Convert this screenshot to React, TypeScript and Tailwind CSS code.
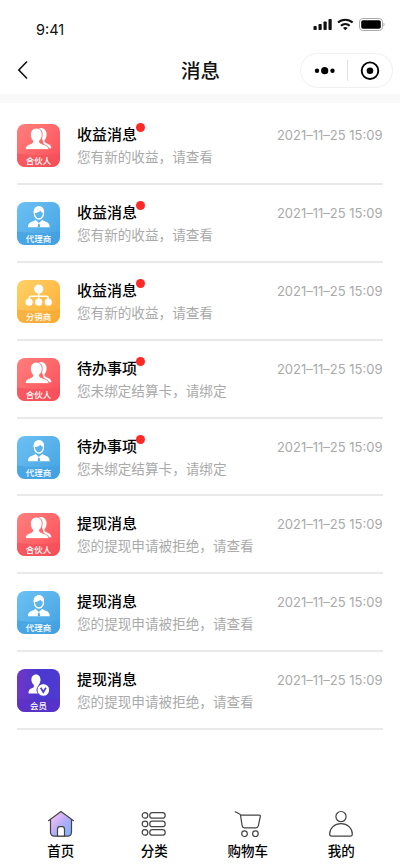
import React from "react";

type Role = "partner" | "agent" | "seller" | "member";

interface Message {
    id: number;
    role: Role;
    title: string;
    content: string;
    time: string;
    unread: boolean;
}

const TIME = "2021–11–25 15:09";

const messages: Message[] = [
    { id: 1, role: "partner", title: "收益消息", content: "您有新的收益，请查看", time: TIME, unread: true },
    { id: 2, role: "agent", title: "收益消息", content: "您有新的收益，请查看", time: TIME, unread: true },
    { id: 3, role: "seller", title: "收益消息", content: "您有新的收益，请查看", time: TIME, unread: true },
    { id: 4, role: "partner", title: "待办事项", content: "您未绑定结算卡，请绑定", time: TIME, unread: true },
    { id: 5, role: "agent", title: "待办事项", content: "您未绑定结算卡，请绑定", time: TIME, unread: true },
    { id: 6, role: "partner", title: "提现消息", content: "您的提现申请被拒绝，请查看", time: TIME, unread: false },
    { id: 7, role: "agent", title: "提现消息", content: "您的提现申请被拒绝，请查看", time: TIME, unread: false },
    { id: 8, role: "member", title: "提现消息", content: "您的提现申请被拒绝，请查看", time: TIME, unread: false },
];

const roles = {
    partner: { label: "合伙人", bg: "bg-linear-to-br from-[#ff7f7c] to-[#fb4a58]", band: "#f5505a" },
    agent: { label: "代理商", bg: "bg-linear-to-br from-[#6cc1f3] to-[#43a2e2]", band: "#429fe0" },
    seller: { label: "分销商", bg: "bg-linear-to-br from-[#ffd166] to-[#fcac2f]", band: "#f5aa36" },
    member: { label: "会员", bg: "bg-linear-to-r from-[#7035c6] via-[#4a38cf] to-[#4d3ad2]", band: "#5a2fc4" },
};

// white glyph in the upper part of the badge
const RoleGlyph = ({ role }: { role: Role }) => {
    if (role === "partner") {
        return (
            <g fill="#fff">
                <path d="M22 4.300c4-1.300 7.600 1.600 7.600 5.900 0 2.500-.8 4.500-2 5.800-.5 1.700 0 2.400 1.800 3.200 3.200 1.300 4.900 2 5 5H28z" />
                <path
                    d="M19.300 4.100c3.700 0 5.900 2.800 5.900 6.600 0 2.500-1 4.800-2.600 6.100-.4 1.700.2 2.200 2.200 3 3 1.200 7 1.700 7 5.800H8.200c0-3.800 2.400-4.700 5.300-5.800 1.900-.7 2.500-1.300 2.200-3-1.400-1.300-2.300-3.600-2.300-6.100 0-3.800 2.300-6.600 5.900-6.600z"
                    stroke="#fd6a6c"
                    strokeWidth="0.900"
                />
            </g>
        );
    }
    if (role === "agent") {
        return (
            <g>
                <ellipse cx="21.900" cy="11" rx="4.600" ry="6" fill="none" stroke="#fff" strokeWidth="1.300" />
                <path d="M16.700 11c-.6-4.200 1.800-6.800 5.200-6.800s5.700 2.600 5.100 6.800c-1.800-.1-2.800-1-3.600-2.300-1.600 1.500-4.200 2.400-6.700 2.300z" fill="#fff" />
                <path d="M18.400 17.700l3.500 3.200 3.500-3.200c.8 1 2 1.500 3.300 2 2.900 1.100 4 2.300 4 5.600H10.900c0-3.300 1.200-4.500 4.200-5.600 1.300-.5 2.500-1 3.300-2z" fill="#fff" />
                <path d="M21.200 21.800h1.400l.6 3.500h-2.600z" fill="#55aee8" />
            </g>
        );
    }
    if (role === "seller") {
        return (
            <g fill="#fff">
                <circle cx="21.700" cy="9" r="4.600" />
                <path d="M21.700 12v8M12.100 20v-1.500c0-1.500.8-2.300 2.300-2.300H29c1.500 0 2.300.8 2.300 2.300V20" fill="none" stroke="#fff" strokeWidth="1.400" />
                <circle cx="12.100" cy="22.200" r="3.600" />
                <circle cx="21.700" cy="22.200" r="3.600" />
                <circle cx="31.300" cy="22.200" r="3.600" />
            </g>
        );
    }
    return (
        <g>
            <path d="M19 5.500c2.900 0 4.500 2.300 4.500 5.200 0 2.100-.7 3.800-1.800 5-.5 1.700.2 2.300 2.100 3.100l1 5.800H11.600c-.1-3.500 1-4.500 3.600-5.500 1.600-.6 2-1.500 1.500-3.400-1.400-1.200-2.300-2.900-2.300-5 0-2.900 1.700-5.200 4.600-5.200z" fill="#fff" />
            <circle cx="26.300" cy="21" r="6.300" fill="#fff" stroke="#4b39cf" strokeWidth="1" />
            <path d="M23.700 18.800l2.600 4.400 2.600-4.400" fill="none" stroke="#4a38cf" strokeWidth="1.700" />
        </g>
    );
};

const RoleBadge = ({ role }: { role: Role }) => {
    const item = roles[role];
    return (
        <div className={`grid size-[43px] shrink-0 overflow-hidden rounded-[8px] ${item.bg}`}>
            <svg viewBox="0 0 43 43" className="col-start-1 row-start-1 size-[43px]">
                <path d="M0 29.500Q21.500 33 43 29.500V43H0z" fill={item.band} opacity="0.650" />
                <RoleGlyph role={role} />
            </svg>
            <span className="col-start-1 row-start-1 self-end pb-[2px] text-center text-[8.500px] leading-[10px] font-medium text-white">
                {item.label}
            </span>
        </div>
    );
};

const StatusBar = () => (
    <div className="flex h-[48px] items-start justify-between pr-[15px] pl-9">
        <span className="pt-[21px] font-['Inter'] text-[14.500px] leading-[18px]">9:41</span>
        <svg width="72" height="14" viewBox="0 0 72 14" className="mt-[18px]">
            <g fill="#111">
                <rect x="0.500" y="8" width="3.200" height="4" rx="0.800" />
                <rect x="5.500" y="6" width="3.200" height="6" rx="0.800" />
                <rect x="10.500" y="3.500" width="3.200" height="8.500" rx="0.800" />
                <rect x="15.500" y="1" width="3.200" height="11" rx="0.800" />
            </g>
            <g fill="none" stroke="#111" strokeWidth="2.100">
                <path d="M25 4.600c4-3.900 10.600-3.900 14.600 0" />
                <path d="M27.900 7.800c2.500-2.300 6.300-2.300 8.800 0" />
            </g>
            <path d="M30 9.900c1.300-1.100 3.300-1.100 4.600 0L32.300 12.200z" fill="#111" />
            <rect x="46.500" y="0.500" width="23" height="12" rx="3.300" fill="#fff" stroke="#aaa" />
            <rect x="48.200" y="2.200" width="19.600" height="8.600" rx="1.800" fill="#000" />
            <path d="M70.500 4.500v4c1.400-.6 1.400-3.400 0-4z" fill="#aaa" />
        </svg>
    </div>
);

const NavBar = () => (
    <div className="grid h-[46px] grid-cols-[1fr_auto_1fr] items-center pr-[7px] pb-[2px] pl-[17px]">
        <svg width="12" height="20" viewBox="0 0 12 20" fill="none" stroke="#111" strokeWidth="1.600">
            <path d="M10 1.500L1.800 10l8.200 8.500" />
        </svg>
        <h1 className="mr-[9px] text-[19.500px] leading-7 font-medium">消息</h1>
        <div className="flex h-[35px] w-[93px] items-center justify-self-end rounded-full border border-[#f0f0f0]">
            <svg width="91" height="33" viewBox="0 0 91 33">
                <g fill="#000">
                    <circle cx="16" cy="16.700" r="2.200" />
                    <circle cx="23.700" cy="16.700" r="3.600" />
                    <circle cx="31.500" cy="16.700" r="2.200" />
                    <circle cx="69" cy="16.700" r="3.300" />
                </g>
                <path d="M46.500 6v21" stroke="#dedede" />
                <circle cx="69" cy="16.700" r="8.300" fill="none" stroke="#000" strokeWidth="1.900" />
            </svg>
        </div>
    </div>
);

const MessageRow = ({ message }: { message: Message }) => (
    <li className="flex h-[77.880px] border-b-2 border-[#e9e9e9] pt-[17px]">
        <RoleBadge role={message.role} />
        <div className="-mt-px ml-[17px] flex-1">
            <div className="flex items-start justify-between">
                <div className="flex">
                    <h2 className="text-[15px] leading-[22px] font-medium text-black">{message.title}</h2>
                    {message.unread && <span className="-ml-px size-[9px] rounded-full bg-[#fb2a26]" />}
                </div>
                <span className="pt-[2px] pr-[0.500px] font-['Inter'] text-[13px] leading-[20px] text-[#aaaaaa]">
                    {message.time}
                </span>
            </div>
            <p className="text-[13.600px] leading-[23px] text-[#aaaaaa]">{message.content}</p>
        </div>
    </li>
);

const tabs = [
    {
        label: "首页",
        icon: (
            <>
                <defs>
                    <linearGradient id="home" x1="0" y1="0" x2="1" y2="1">
                        <stop offset="0.150" stopColor="#f0bdf6" />
                        <stop offset="0.550" stopColor="#b0adfa" />
                        <stop offset="1" stopColor="#78b4fa" />
                    </linearGradient>
                </defs>
                <path d="M3.500 9.500V22c0 2.800 1.200 4.200 4 4.200h13c2.800 0 4-1.400 4-4.200V9.500L14 1.700z" fill="url(#home)" stroke="none" />
                <path d="M1.500 10.700L14 1.500l12.500 9.200M3.500 9.500V22c0 2.800 1.200 4.200 4 4.200h13c2.800 0 4-1.400 4-4.200V9.500" />
                <path d="M10.500 26.200v-6.700c0-1.800.8-2.800 2.300-2.800h2.400c1.500 0 2.300 1 2.300 2.800v6.700z" fill="#fff" />
            </>
        ),
    },
    {
        label: "分类",
        icon: (
            <>
                <circle cx="5" cy="5.400" r="2.800" />
                <circle cx="5" cy="13.900" r="2.800" />
                <circle cx="5" cy="22.400" r="2.800" />
                <rect x="9.700" y="2.600" width="15.500" height="5.600" rx="2.800" />
                <rect x="9.700" y="11.100" width="15.500" height="5.600" rx="2.800" />
                <rect x="9.700" y="19.600" width="15.500" height="5.600" rx="2.800" />
            </>
        ),
    },
    {
        label: "购物车",
        icon: (
            <>
                <path d="M1.200 1.800l4 2c.9.400 1.200.8 1.400 1.700M6.500 5.100h18.700c.9 0 1.300.5 1.100 1.400l-1.900 9.200c-.3 1.500-1 2.100-2.500 2.100H10.500c-1.500 0-2.200-.7-2.400-2.100z" />
                <circle cx="10.500" cy="23.700" r="2.800" />
                <circle cx="21.400" cy="23.700" r="2.800" />
            </>
        ),
    },
    {
        label: "我的",
        icon: (
            <>
                <circle cx="14" cy="6.600" r="5.100" />
                <path d="M2.700 24c0-5.800 4.800-10.400 11.300-10.400S25.300 18.200 25.300 24c0 1.600-.5 2.200-2 2.200H4.700c-1.500 0-2-.6-2-2.200z" />
            </>
        ),
    },
];

const TabBar = () => (
    <nav className="mt-auto grid h-[58px] grid-cols-4 pr-[12px] pl-[14px]">
        {tabs.map((tab) => (
            <a key={tab.label} className="flex flex-col items-center">
                <svg width="28" height="28" viewBox="0 0 28 28" fill="none" stroke="#444" strokeWidth="1.200" strokeLinejoin="round" strokeLinecap="round" className="mt-[2px]">
                    {tab.icon}
                </svg>
                <span className="mt-[2px] text-[13.500px] leading-5 font-medium text-black">{tab.label}</span>
            </a>
        ))}
    </nav>
);

const App = () => {
    return (
        <div className="flex h-[866px] w-[400px] flex-col overflow-hidden bg-white font-['Noto_Sans_CJK_SC',sans-serif] text-[#111111]">
            <StatusBar />
            <NavBar />
            <div className="h-[9px] bg-[#f9f9f9]" />
            <ul className="mt-[4px] px-[17px]">
                {messages.map((message) => (
                    <MessageRow key={message.id} message={message} />
                ))}
            </ul>
            <TabBar />
        </div>
    );
};

export default App;
